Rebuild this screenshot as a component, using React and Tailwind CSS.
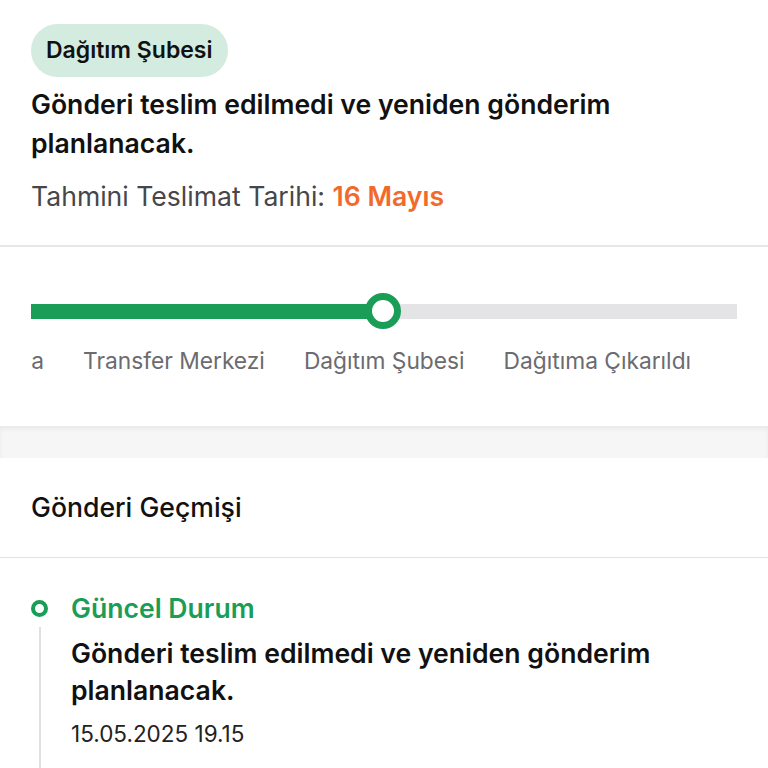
const steps = ['Yolda', 'Transfer Merkezi', 'Dağıtım Şubesi', 'Dağıtıma Çıkarıldı'];

function Progress() {
  return (
    <div className="px-[31px] pt-[46px] pb-[50px] overflow-hidden">
      <div className="relative flex items-center h-[36px]">
        <div className="h-[15px] w-[352px] bg-[#1a9d56]" />
        <div className="h-[15px] flex-1 bg-[#e4e4e7]" />
        <div className="absolute left-[334px] top-0 h-[36px] w-[36px] rounded-full border-[7px] border-[#1a9d56] bg-white" />
      </div>
      <div className="mt-[17px] flex gap-[39px] whitespace-nowrap text-[22.75px] leading-[30px] text-[#6b6b70]">
        <span className="flex w-[13px] shrink-0 justify-end overflow-hidden">{steps[0]}</span>
        {steps.slice(1).map((s) => (
          <span key={s} className="shrink-0">{s}</span>
        ))}
      </div>
    </div>
  );
}

export default function App() {
  return (
    <div className="min-h-screen bg-white font-['Inter','Noto_Sans',sans-serif] text-[#111]">
      <section className="px-[31px] pt-6 pb-[33px]">
        <span className="inline-flex h-[53px] items-center rounded-full bg-[#d3ecdf] px-[15px] text-[23px] font-semibold">
          Dağıtım Şubesi
        </span>
        <h1 className="mt-2 text-[26.6px] font-semibold leading-[39px]">
          Gönderi teslim edilmedi ve yeniden gönderim planlanacak.
        </h1>
        <p className="mt-[17px] text-[26.6px] leading-[32px] text-[#47474a]">
          Tahmini Teslimat Tarihi: <span className="font-semibold text-[#f26a2b]">16 Mayıs</span>
        </p>
      </section>

      <div className="h-[2px] bg-[#e6e6e6]" />

      <Progress />

      <div className="h-8 bg-[#f6f6f6] shadow-[inset_0_3px_4px_rgba(0,0,0,0.05)]" />

      <section className="px-[31px] pt-[33px] pb-[34px]">
        <h2 className="text-[26.6px] font-medium leading-[32px]">Gönderi Geçmişi</h2>
      </section>
      <div className="h-px bg-[#e2e2e2]" />

      <section className="flex px-[31px] pt-[34px] pb-12">
        <div className="flex w-[40px] shrink-0 flex-col">
          <div className="mt-[8px] h-[17px] w-[17px] rounded-full border-[4.5px] border-[#1a9d56]" />
          <div className="ml-[8px] mt-[10px] w-[2px] flex-1 bg-[#e0e0e0]" />
        </div>
        <div className="pb-16">
          <p className="text-[26.6px] font-semibold leading-[32px] text-[#1a9d56]">Güncel Durum</p>
          <p className="mt-[11px] text-[26.6px] font-semibold leading-[37px]">
            Gönderi teslim edilmedi ve yeniden gönderim planlanacak.
          </p>
          <p className="mt-[10px] text-[22.5px] leading-[30px] text-[#222]">15.05.2025 19.15</p>
        </div>
      </section>
    </div>
  );
}
